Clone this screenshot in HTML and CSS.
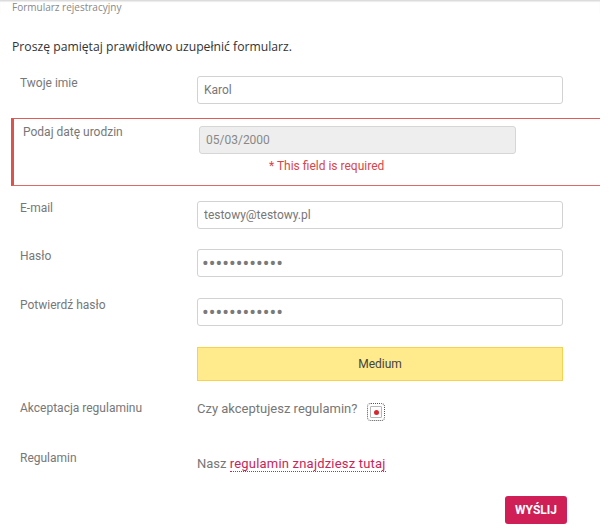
FILE: index.html
```html
<!DOCTYPE html>
<html lang="pl">
<head>
<meta charset="utf-8">
<title>Formularz rejestracyjny</title>
<link rel="stylesheet" href="styles.css">
</head>
<body>
<div class="page">
  <div class="header">Formularz rejestracyjny</div>
  <p class="intro">Proszę pamiętaj prawidłowo uzupełnić formularz.</p>

  <form class="form">
    <div class="row row-first">
      <label class="label">Twoje imie</label>
      <input class="field" type="text" value="Karol">
    </div>

    <div class="row-error">
      <div class="error-line">
        <label class="label label-error">Podaj datę urodzin</label>
        <input class="field field-disabled" type="text" value="05/03/2000" disabled>
      </div>
      <div class="error-msg">* This field is required</div>
    </div>

    <div class="row row-email">
      <label class="label">E-mail</label>
      <input class="field" type="text" value="testowy@testowy.pl">
    </div>

    <div class="row row-pass">
      <label class="label">Hasło</label>
      <input class="field field-pass" type="password" value="testowehaslo">
    </div>

    <div class="row row-confirm">
      <label class="label">Potwierdź hasło</label>
      <input class="field field-pass" type="password" value="testowehaslo">
    </div>

    <div class="row row-strength">
      <span class="label"></span>
      <div class="strength">Medium</div>
    </div>

    <div class="row row-accept">
      <label class="label">Akceptacja regulaminu</label>
      <span class="question">Czy akceptujesz regulamin?</span>
      <span class="check"><span class="check-dot"></span></span>
    </div>

    <div class="row row-rules">
      <label class="label">Regulamin</label>
      <span class="rules">Nasz <a class="rules-link" href="#">regulamin znajdziesz tutaj</a></span>
    </div>

    <div class="actions">
      <button class="submit" type="button">WYŚLIJ</button>
    </div>
  </form>
</div>
</body>
</html>
```

FILE: styles.css
```css
html, body {
  margin: 0;
  padding: 0;
  background: #fff;
}

.page {
  width: 609px;
  font-family: Roboto, "Liberation Sans", sans-serif;
  font-size: 12px;
  color: #777;
}

.header {
  width: 600px;
  border-top: 1px solid #dcdcdc;
  box-shadow: inset 0 1px 1px #ececec;
  padding-left: 12px;
  box-sizing: border-box;
  font-family: "Open Sans", sans-serif;
  font-size: 10px;
  line-height: 13px;
  color: #888;
}

.intro {
  margin: 24px 0 0 12px;
  font-family: "Open Sans", sans-serif;
  font-size: 12.2px;
  line-height: 17px;
  color: #333;
}

.form {
  margin: 0;
}

.row {
  display: flex;
  align-items: flex-start;
  padding-left: 20px;
}

.row-first { margin-top: 21px; }
.row-email { margin-top: 15px; }
.row-pass { margin-top: 20px; }
.row-confirm { margin-top: 21px; }
.row-strength { margin-top: 21px; }
.row-accept { margin-top: 20px; }
.row-rules { margin-top: 33px; }

.label {
  flex: 0 0 177px;
  font-size: 12px;
  line-height: 14px;
  color: #777;
}

.field {
  box-sizing: border-box;
  width: 366px;
  height: 28px;
  margin: 0;
  padding: 0 6px;
  border: 1px solid #d2d2d2;
  border-radius: 3px;
  background: #fff;
  font-family: Roboto, "Liberation Sans", sans-serif;
  font-size: 12px;
  color: #777;
  outline: none;
}

.field-pass {
  padding-left: 4px;
  font-size: 20px;
  letter-spacing: 0;
  color: #7a7a7a;
}

.row-error {
  box-sizing: border-box;
  width: 589px;
  margin: 14px 0 0 11px;
  padding: 7px 0 12px 9px;
  border-left: 3px solid #d9534f;
  border-top: 1px solid #de5d5a;
  border-bottom: 1px solid #de6a67;
}

.error-line {
  display: flex;
  align-items: flex-start;
}

.label-error {
  flex: 0 0 176px;
  margin-top: -1px;
}

.field-disabled {
  width: 317px;
  background: #eeeeee;
  border-color: #d6d6d6;
  color: #888;
  -webkit-text-fill-color: #888;
  opacity: 1;
}

.error-msg {
  margin: 5px 0 0 246px;
  font-size: 12px;
  line-height: 14px;
  color: #d9454b;
}

.strength {
  box-sizing: border-box;
  width: 366px;
  height: 34px;
  border: 1px solid #f7d24c;
  background: #ffeb8c;
  text-align: center;
  line-height: 32px;
  font-size: 12px;
  color: #444;
}

.question {
  font-size: 13px;
  line-height: 15px;
  color: #777;
}

.check {
  box-sizing: border-box;
  width: 12px;
  height: 12px;
  margin: 5px 0 0 13px;
  border: 1px solid #b8b8b8;
  border-radius: 1px;
  outline: 1px dotted #555;
  outline-offset: 2px;
  display: flex;
  align-items: center;
  justify-content: center;
}

.check-dot {
  width: 5px;
  height: 5px;
  border-radius: 50%;
  background: #d8282f;
}

.rules {
  margin-top: 5px;
  font-size: 13px;
  line-height: 15px;
  color: #777;
}

.rules-link {
  color: #c9245a;
  text-decoration: none;
  letter-spacing: 0.2px;
  border-bottom: 1px dotted #c9245a;
}

.actions {
  display: flex;
  justify-content: flex-end;
  padding-right: 42px;
  margin-top: 25px;
}

.submit {
  height: 28px;
  padding: 0 10px;
  border: none;
  border-radius: 3px;
  background: #cf1f56;
  color: #fff;
  font-family: Roboto, "Liberation Sans", sans-serif;
  font-weight: bold;
  font-size: 12px;
  cursor: pointer;
}
```
